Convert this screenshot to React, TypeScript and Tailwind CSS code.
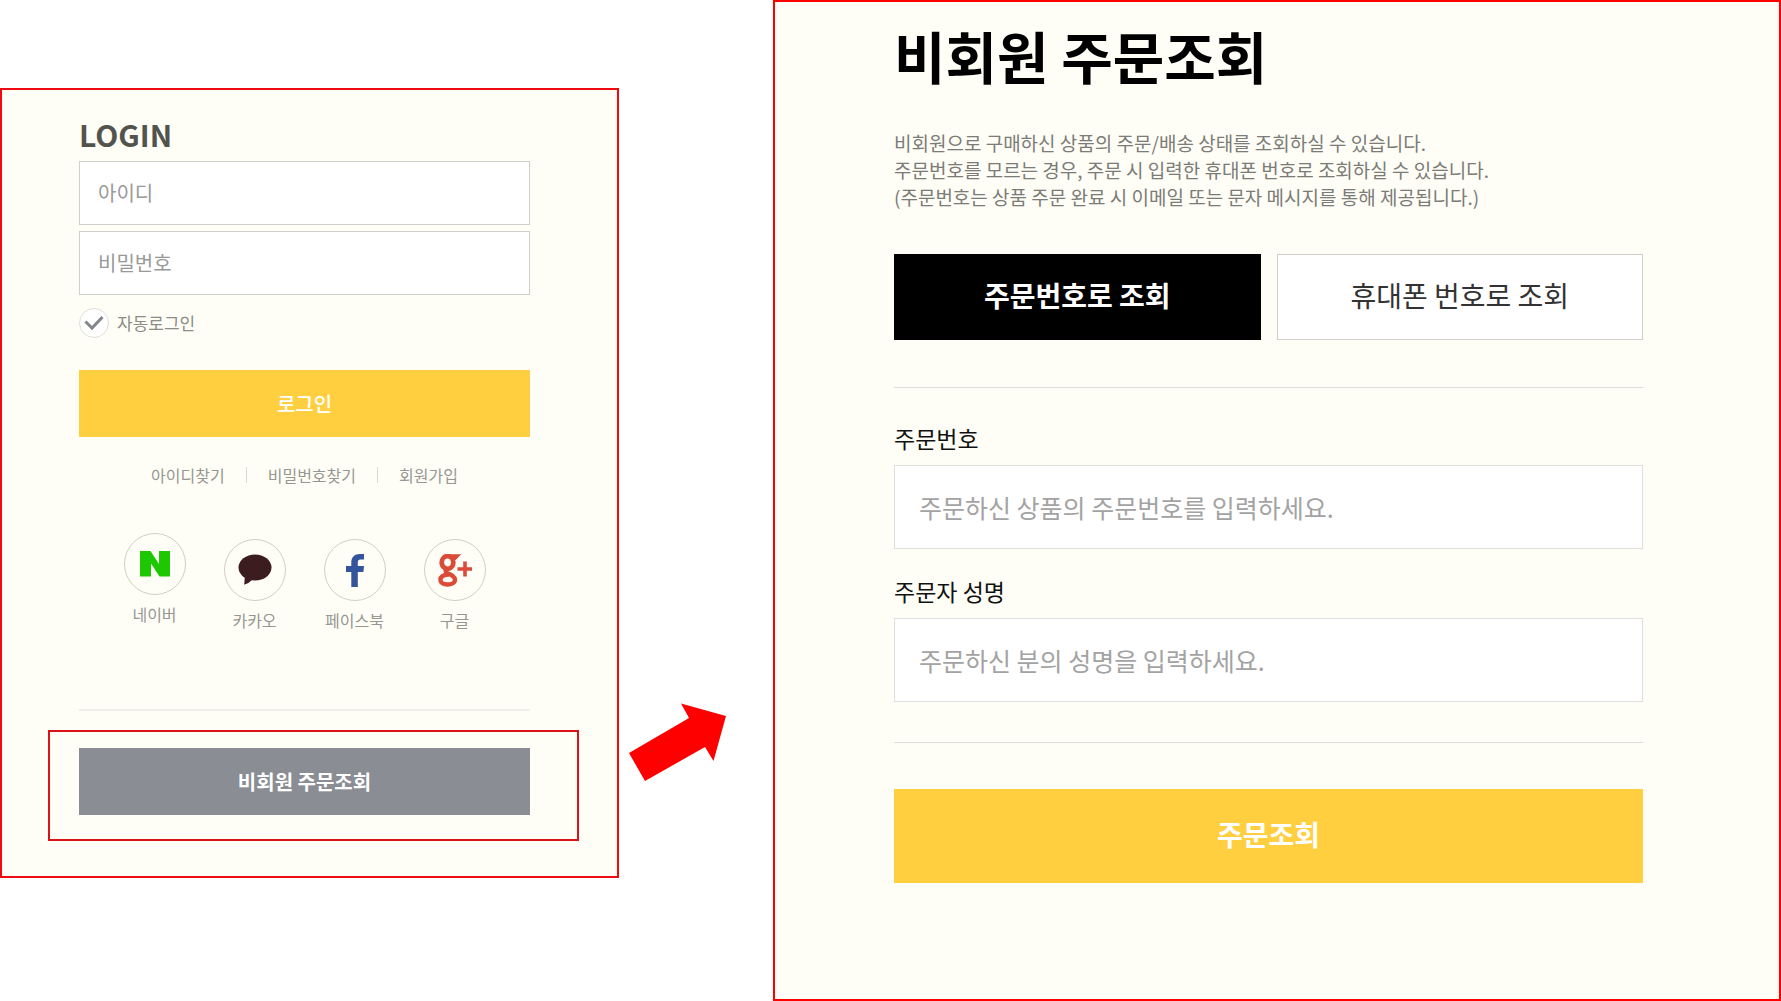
import type { ReactNode } from 'react';

function NaverLogo() {
  return (
    <svg viewBox="0 0 30 26" className="h-[26px] w-[30px]" fill="#1ec800" aria-hidden="true">
      <path d="M0 0h10.500l8.500 13V0H30v25.500H19.500L11 12.500v13H0z" />
    </svg>
  );
}

function KakaoLogo() {
  return (
    <svg viewBox="0 0 34 32" className="h-8 w-[34px]" fill="#3b1d20" aria-hidden="true">
      <ellipse cx="17" cy="13.500" rx="16.500" ry="13" />
      <path d="M7 21 L6.200 30.800 Q11 29.500 15 25 Z" />
    </svg>
  );
}

function FacebookLogo() {
  return (
    <svg viewBox="0 0 18 33" className="h-[33px] w-[18px]" fill="#34549b" aria-hidden="true">
      <path d="M5.300 33V18H0v-6h5.300V8.500C5.300 3 8.600 0 14 0h4v5.500h-3.500c-2 0-2.700 1.200-2.700 3V12H18l-.6 6h-5.600v15z" />
    </svg>
  );
}

function GooglePlusLogo() {
  return (
    <svg viewBox="0 0 34 33" className="h-[33px] w-[34px]" fill="none" stroke="#dc4a38" aria-hidden="true">
      <ellipse cx="9.500" cy="8.500" rx="5.800" ry="6.300" strokeWidth="4.800" />
      <path d="M9.500 1.800h10l-2.500 2.600h-3.500" strokeWidth="3.200" />
      <path d="M9.500 14.500c-2.500 1.800-2.500 3.500 0 4.800 4 1.700 7.500 3.200 7.500 6.400 0 3-3.200 4.800-7.500 4.800S2.400 28.800 2.400 25.800s3-5 8.300-5.300" strokeWidth="4.400" />
      <path d="M19.500 15h14.500M27 7.500v15" strokeWidth="3.600" />
    </svg>
  );
}

const socials: { name: string; logo: ReactNode; raised?: boolean }[] = [
  { name: '네이버', logo: <NaverLogo />, raised: true },
  { name: '카카오', logo: <KakaoLogo /> },
  { name: '페이스북', logo: <FacebookLogo /> },
  { name: '구글', logo: <GooglePlusLogo /> },
];

function LoginPanel() {
  return (
    <section className="mt-[88px] self-start border-2 border-[#ee0a10] bg-[#fffef6] pt-6 pr-[38px] pb-[35px] pl-[46px]">
      <form className="pr-[49px] pl-[31px]" onSubmit={(e) => e.preventDefault()}>
        <h2 className="pb-[7px] text-[30px] leading-10 font-bold text-[#53534e]">LOGIN</h2>
        <input
          type="text"
          aria-label="아이디"
          placeholder="아이디"
          className="block h-16 w-full border border-[#cfcfcc] bg-white px-[18px] pb-px text-[20px] placeholder:text-[#999999]"
        />
        <input
          type="password"
          aria-label="비밀번호"
          placeholder="비밀번호"
          className="mt-1.5 block h-16 w-full border border-[#cfcfcc] bg-white px-[18px] pb-px text-[20px] placeholder:text-[#999999]"
        />
        <label className="mt-[13px] flex w-fit items-center gap-2 text-[17px] leading-[30px] text-[#8c8c88]">
          <span className="grid size-[30px] place-items-center">
            <input
              type="checkbox"
              defaultChecked
              className="peer col-start-1 row-start-1 size-[30px] appearance-none rounded-full border border-[#dededb] bg-white"
            />
            <svg
              viewBox="0 0 20 16"
              className="pointer-events-none invisible col-start-1 row-start-1 h-4 w-5 peer-checked:visible"
              fill="none"
              stroke="#84868d"
              strokeWidth="3"
              aria-hidden="true"
            >
              <path d="M1.500 6.500 8 13 18.500 2" />
            </svg>
          </span>
          자동로그인
        </label>
        <button type="submit" className="mt-8 h-[67px] w-full bg-[#ffcf40] text-[20px] font-medium text-white">
          로그인
        </button>
      </form>

      <nav className="mt-[26px] flex items-center justify-center gap-[21px] pr-[49px] pl-[31px] text-[16px] leading-6 text-[#969692]">
        <a href="#find-id">아이디찾기</a>
        <span className="h-4 w-px bg-[#d9d9d4]" />
        <a href="#find-password">비밀번호찾기</a>
        <span className="h-4 w-px bg-[#d9d9d4]" />
        <a href="#join">회원가입</a>
      </nav>

      <ul className="mt-[46px] flex justify-center gap-[38px] pr-[49px] pl-[31px] text-[16px] leading-6 text-[#969692]">
        {socials.map((s) => (
          <li key={s.name} className={s.raised ? 'w-[62px]' : 'mt-1.5 w-[62px]'}>
            <a href="#social" className="flex flex-col items-center gap-[7px] whitespace-nowrap">
              <span className="flex size-[62px] items-center justify-center rounded-full border border-[#cfcfc8]">
                {s.logo}
              </span>
              {s.name}
            </a>
          </li>
        ))}
      </ul>

      <hr className="mt-[77px] mr-[49px] ml-[31px] border-t-2 border-[#efefea]" />

      <div className="mt-[19px] border-2 border-[#d8141a] pt-4 pr-[47px] pb-6 pl-[29px]">
        <button type="button" className="h-[67px] w-full bg-[#8a8d94] text-[20px] font-bold text-white">
          비회원 주문조회
        </button>
      </div>
    </section>
  );
}

function Arrow() {
  return (
    <svg viewBox="0 0 98 78" className="mt-[703px] ml-[10px] h-[78px] w-[98px]" fill="#ff0000" aria-hidden="true">
      <path d="M52 0.500 97 13 84.500 58 76 44 16 78 0 50 60 15z" />
    </svg>
  );
}

function Field({ id, label, placeholder }: { id: string; label: string; placeholder: string }) {
  return (
    <div>
      <label htmlFor={id} className="block text-[23px] leading-[34px] text-[#111111]">
        {label}
      </label>
      <input
        id={id}
        type="text"
        placeholder={placeholder}
        className="mt-2.5 block h-[84px] w-full border border-[#dededc] bg-white px-6 text-[25px] placeholder:text-[#a3a3a3]"
      />
    </div>
  );
}

function GuestOrderPanel() {
  return (
    <section className="min-h-screen border-2 border-[#ff0000] bg-[#fffef6] pt-[11px] pr-[136px] pl-[119px]">
      <h1 className="text-[56px] leading-[84px] font-bold text-black">비회원 주문조회</h1>
      <p className="mt-8 text-[19px] leading-[27px] text-[#7b7b77]">
        비회원으로 구매하신 상품의 주문/배송 상태를 조회하실 수 있습니다.
        <br />
        주문번호를 모르는 경우, 주문 시 입력한 휴대폰 번호로 조회하실 수 있습니다.
        <br />
        (주문번호는 상품 주문 완료 시 이메일 또는 문자 메시지를 통해 제공됩니다.)
      </p>
      <div className="mt-11 grid grid-cols-2 gap-4 text-[28px]">
        <button type="button" className="h-[86px] bg-black pb-1 font-bold text-white">
          주문번호로 조회
        </button>
        <button type="button" className="h-[86px] border border-[#cfcfcc] bg-white pb-1 text-[#333333]">
          휴대폰 번호로 조회
        </button>
      </div>
      <hr className="mt-[47px] border-[#deded9]" />
      <form onSubmit={(e) => e.preventDefault()}>
        <div className="mt-[33px] space-y-[25px]">
          <Field id="order-number" label="주문번호" placeholder="주문하신 상품의 주문번호를 입력하세요." />
          <Field id="order-name" label="주문자 성명" placeholder="주문하신 분의 성명을 입력하세요." />
        </div>
        <hr className="mt-10 border-[#deded9]" />
        <button type="submit" className="mt-[46px] h-[94px] w-full bg-[#ffcf40] pb-1 text-[28px] font-bold text-white">
          주문조회
        </button>
      </form>
    </section>
  );
}

export default function App() {
  return (
    <main className="grid min-h-screen grid-cols-[619fr_154fr_1008fr] bg-white font-['Noto_Sans_CJK_KR',sans-serif]">
      <LoginPanel />
      <Arrow />
      <GuestOrderPanel />
    </main>
  );
}
